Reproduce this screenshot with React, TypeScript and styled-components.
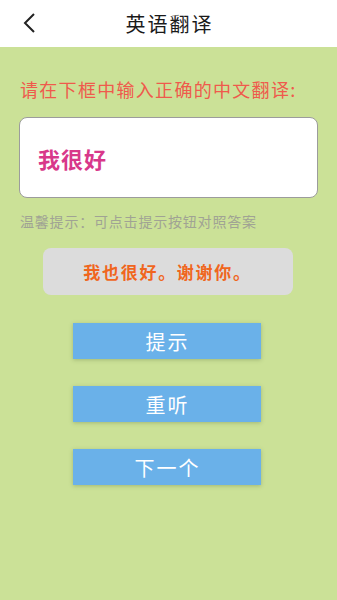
import React from "react";
import styled, { createGlobalStyle } from "styled-components";

const GlobalStyle = createGlobalStyle`
    html, body {
        margin: 0;
        padding: 0;
        background: #cbe197;
    }
    body {
        font-family: "Noto Sans CJK SC", "Noto Sans", sans-serif;
    }
`;

const Page = styled.div`
    display: flex;
    flex-direction: column;
    min-height: 600px;
    background: #cbe197;
`;

const Header = styled.header`
    position: relative;
    display: flex;
    align-items: center;
    justify-content: center;
    height: 47px;
    background: #ffffff;
`;

const BackButton = styled.button`
    position: absolute;
    left: 17px;
    top: 9px;
    display: flex;
    align-items: center;
    justify-content: center;
    width: 24px;
    height: 28px;
    padding: 0;
    border: none;
    background: transparent;
`;

const Title = styled.h1`
    margin: 0 0 0 2px;
    font-size: 20px;
    font-weight: 400;
    color: #1a1a1a;
    letter-spacing: 2px;
`;

const Content = styled.main`
    display: flex;
    flex-direction: column;
    padding: 28px 19px 0 19px;
`;

const Prompt = styled.p`
    margin: 0 0 0 1px;
    font-size: 18px;
    line-height: 28px;
    color: #ef5a4c;
    letter-spacing: 1.3px;
    white-space: nowrap;
`;

const InputBox = styled.div`
    display: flex;
    align-items: center;
    height: 81px;
    margin-top: 14px;
    padding: 0 18px;
    box-sizing: border-box;
    background: #ffffff;
    border: 1px solid #9c9c9c;
    border-radius: 8px;
`;

const InputText = styled.span`
    font-size: 22px;
    font-weight: 700;
    color: #d8388a;
    letter-spacing: 1px;
`;

const Hint = styled.p`
    margin: 13px 0 0 1px;
    font-size: 14px;
    line-height: 20px;
    color: #a0a394;
    letter-spacing: 0.8px;
    white-space: nowrap;
`;

const AnswerBox = styled.div`
    display: flex;
    align-items: center;
    justify-content: center;
    align-self: center;
    width: 250px;
    height: 47px;
    margin: 17px 2px 0 0;
    background: #dcdcdc;
    border-radius: 8px;
    font-size: 17px;
    font-weight: 700;
    color: #f0661e;
    letter-spacing: 1.7px;
`;

const Buttons = styled.div`
    display: flex;
    flex-direction: column;
    align-items: center;
    gap: 27px;
    margin-top: 28px;
    padding-right: 4px;
`;

const ActionButton = styled.button`
    width: 188px;
    height: 36px;
    padding: 0 0 0 2px;
    border: none;
    background: #6ab1e9;
    color: #ffffff;
    font-family: "Noto Sans CJK SC", "Noto Sans", sans-serif;
    font-size: 20px;
    letter-spacing: 2px;
    box-shadow: 0 1px 4px rgba(90, 110, 60, 0.35);
`;

const App: React.FC = (): React.ReactElement => {
    const actions = ["提示", "重听", "下一个"];

    return (
        <Page>
            <GlobalStyle />
            <Header>
                <BackButton aria-label="back">
                    <svg width="14" height="22" viewBox="0 0 14 22">
                        <path d="M12 2 L3 11 L12 20" fill="none" stroke="#222" strokeWidth="2" />
                    </svg>
                </BackButton>
                <Title>英语翻译</Title>
            </Header>
            <Content>
                <Prompt>请在下框中输入正确的中文翻译:</Prompt>
                <InputBox>
                    <InputText>我很好</InputText>
                </InputBox>
                <Hint>温馨提示：可点击提示按钮对照答案</Hint>
                <AnswerBox>我也很好。谢谢你。</AnswerBox>
                <Buttons>
                    {actions.map((label) => (
                        <ActionButton key={label}>{label}</ActionButton>
                    ))}
                </Buttons>
            </Content>
        </Page>
    );
};

export default App;
